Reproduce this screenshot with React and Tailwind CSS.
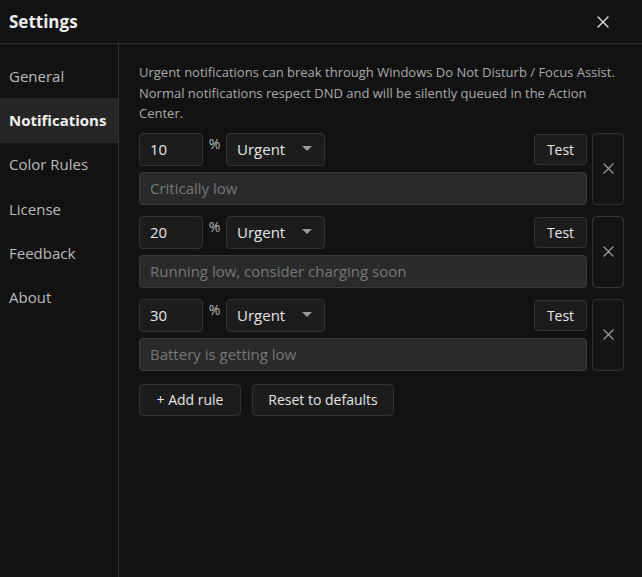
import React from 'react';

const rules = [
  { pct: '10', level: 'Urgent', msg: 'Critically low' },
  { pct: '20', level: 'Urgent', msg: 'Running low, consider charging soon' },
  { pct: '30', level: 'Urgent', msg: 'Battery is getting low' },
];

const navItems = ['General', 'Notifications', 'Color Rules', 'License', 'Feedback', 'About'];

const CloseIcon = ({ size = 12, className = '' }) => (
  <svg width={size} height={size} viewBox="0 0 12 12" className={className}>
    <path d="M1 1 L11 11 M11 1 L1 11" stroke="currentColor" strokeWidth="1.4" strokeLinecap="round" />
  </svg>
);

const RuleRow = ({ rule }) => (
  <div className="flex gap-[5px]">
    <div className="flex flex-col gap-[6px] w-[448px]">
      <div className="flex items-start">
        <div className="w-[64px] h-[33px] rounded-[4px] border border-[#333] bg-[#1c1c1c] flex items-center px-[10px] text-[15px] text-[#e6e6e6]">
          {rule.pct}
        </div>
        <span className="w-[23px] text-center text-[14px] text-[#bbb] leading-[20px] pt-[1px]">%</span>
        <div className="w-[99px] h-[33px] rounded-[4px] border border-[#333] bg-[#1c1c1c] flex items-center justify-between pl-[10px] pr-[12px] text-[15px] text-[#e6e6e6]">
          <span>{rule.level}</span>
          <svg width="10" height="6" viewBox="0 0 10 6"><path d="M0 0 L10 0 L5 5 Z" fill="#999" /></svg>
        </div>
        <div className="ml-auto mt-[1px] w-[53px] h-[31px] rounded-[4px] border border-[#333] bg-[#1c1c1c] flex items-center justify-center text-[14px] text-[#e6e6e6]">
          Test
        </div>
      </div>
      <div className="h-[33px] rounded-[4px] border border-[#3a3a3a] bg-[#2a2a2a] flex items-center px-[10px] text-[15px] text-[#777]">
        {rule.msg}
      </div>
    </div>
    <div className="w-[32px] h-[72px] rounded-[4px] border border-[#333] bg-[#151515] flex items-center justify-center text-[#aaa]">
      <CloseIcon size={11} />
    </div>
  </div>
);

export default function App() {
  return (
    <div className="w-[642px] h-[577px] bg-[#121212] text-[#ddd] flex flex-col overflow-hidden" style={{ fontFamily: '"Open Sans", "Noto Sans", sans-serif' }}>
      <div className="h-[44px] shrink-0 border-b border-[#333] flex items-center justify-between pl-[9px] pr-[33px]">
        <span className="text-[17px] font-bold text-[#eee]">Settings</span>
        <CloseIcon size={12} className="text-[#ddd]" />
      </div>
      <div className="flex flex-1">
        <div className="w-[119px] shrink-0 border-r border-[#333] pt-[10px]">
          {navItems.map((item) => (
            <div
              key={item}
              className={
                item === 'Notifications'
                  ? 'h-[44.3px] flex items-center pl-[9px] text-[15px] font-bold text-[#f0f0f0] bg-[#262626]'
                  : 'h-[44.3px] flex items-center pl-[9px] text-[15px] text-[#bbb]'
              }
            >
              {item}
            </div>
          ))}
        </div>
        <div className="flex-1 pl-[20px] pr-[18px] pt-[18px]">
          <p className="text-[13px] leading-[20.5px] text-[#aaa] mb-[9px]">
            Urgent notifications can break through Windows Do Not Disturb / Focus Assist. Normal notifications respect DND and will be silently queued in the Action Center.
          </p>
          <div className="flex flex-col gap-[11px]">
            {rules.map((r) => (
              <RuleRow key={r.pct} rule={r} />
            ))}
          </div>
          <div className="flex gap-[11px] mt-[13px]">
            <div className="w-[102px] h-[32px] rounded-[4px] border border-[#333] bg-[#1c1c1c] flex items-center justify-center text-[14px] text-[#e6e6e6]">
              + Add rule
            </div>
            <div className="w-[142px] h-[32px] rounded-[4px] border border-[#333] bg-[#1c1c1c] flex items-center justify-center text-[14px] text-[#e6e6e6]">
              Reset to defaults
            </div>
          </div>
        </div>
      </div>
    </div>
  );
}
